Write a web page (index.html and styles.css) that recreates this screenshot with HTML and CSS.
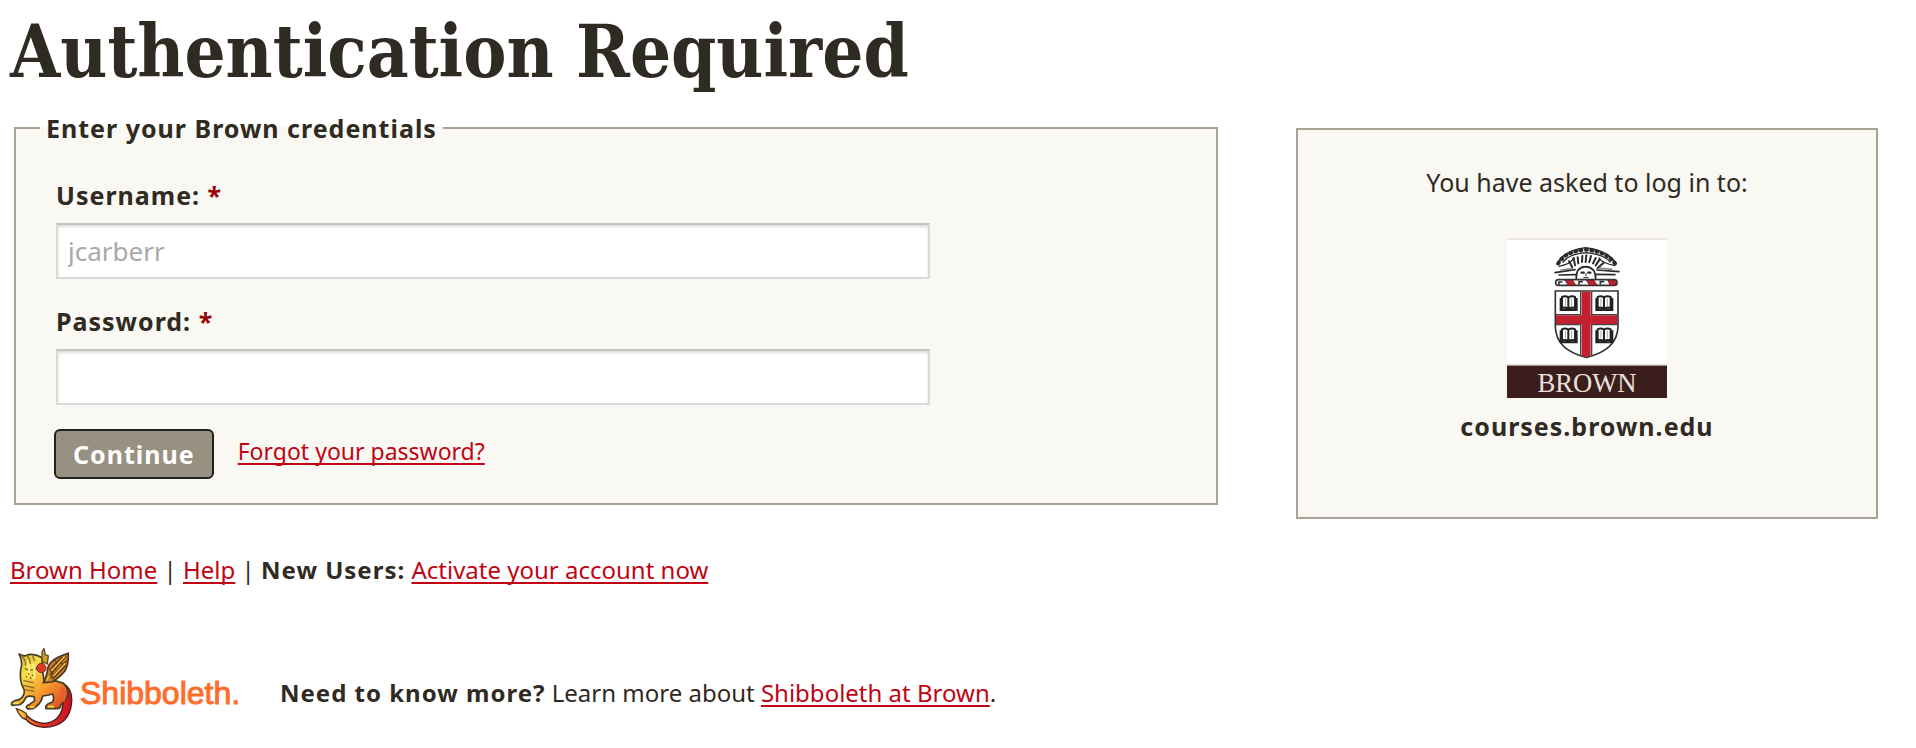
FILE: index.html
```html
<!DOCTYPE html>
<html lang="en">
<head>
  <meta charset="UTF-8" />
  <meta name="viewport" content="width=device-width, initial-scale=1.0"/>
  <title>Authentication Required</title>
  <link rel="stylesheet" href="styles.css">
</head>
<body>

  <header>
    <h1>Authentication Required</h1>
  </header>

  <main class="columns">
    <form class="login" action="#" method="post">
      <fieldset>
        <legend>Enter your Brown credentials</legend>

        <label for="username">Username: <span class="required">*</span></label>
        <input type="text" id="username" name="username" placeholder="jcarberr">

        <label for="password">Password: <span class="required">*</span></label>
        <input type="password" id="password" name="password">

        <div class="actions">
          <button type="submit">Continue</button>
          <a href="#">Forgot your password?</a>
        </div>
      </fieldset>
    </form>

    <aside class="service">
      <p>You have asked to log in to:</p>
      <svg class="crest" viewBox="84 54 480 480" role="img" aria-label="Brown University">
        <rect x="84" y="54" width="480" height="480" fill="#fff"/>
        <rect x="84" y="54" width="480" height="6" fill="#ece7e4"/>
        <!-- clouds and sun -->
        <g fill="none" stroke="#2b2b2b" stroke-linecap="round">
          <path d="M238 130 Q258 94 320 89 Q382 94 408 130" stroke-width="12" stroke-dasharray="3 13"/>
          <path d="M234 134 Q250 92 320 83 Q390 92 412 132 M240 139 Q276 132 284 114 M408 137 Q370 130 360 114 M252 126 Q270 102 320 98 Q372 102 394 126" stroke-width="4"/>
          <path d="M280 142 L270 124 M288 136 L284 114 M298 130 L296 112 M309 126 L310 108 M320 126 L322 106 M331 126 L336 108 M342 130 L350 114 M350 136 L362 118 M356 144 L374 128" stroke-width="6"/>
          <path d="M228 158 L288 149 M240 165 L292 164 M420 155 L354 150 M408 164 L352 163" stroke-width="5"/>
          <path d="M246 150 L280 146 M398 148 L362 144" stroke="#888" stroke-width="5"/>
          <path d="M292 176 Q290 142 320 140 Q350 142 350 176" fill="#fff" stroke-width="5"/>
          <path d="M308 158 h6 M328 158 h6" stroke-width="7"/>
          <path d="M321 161 v7 M314 173 h14" stroke-width="3"/>
        </g>
        <!-- torse -->
        <rect x="230" y="179" width="184" height="17" rx="8" fill="#fff" stroke="#333" stroke-width="5"/>
        <path d="M258 180 H280 L290 196 H268 Z M322 180 H344 L354 196 H332 Z M386 180 H406 Q414 188 408 196 H394 Z" fill="#c3202f" stroke="#5b2026" stroke-width="3"/>
        <path d="M240 194 V186 H250 M300 194 V185 H312 M364 194 V185 H376" fill="none" stroke="#333" stroke-width="5"/>
        <!-- shield -->
        <path d="M229 213 H417 V320 Q415 390 322 412 Q231 390 229 320 Z" fill="#fff" stroke="#333" stroke-width="5"/>
        <path d="M308 215 H335 V286 H415 V312 H335 V407 L322 410 L308 407 V312 H231 V286 H308 Z" fill="#c3202f"/>
        <path d="M305 215 V284 H231 M338 215 V284 H415 M231 314 H305 V406 M415 314 H338 V406" fill="none" stroke="#444" stroke-width="4"/>
        <g fill="#fff" stroke="#222" stroke-width="6">
          <path id="book" d="M249 231 Q259 226 268 232 Q278 226 288 231 V264 Q278 261 268 266 Q259 261 249 264 Z M268 232 V270 M245 234 V270 H293 V234"/>
          <use href="#book" x="107"/>
          <use href="#book" y="97"/>
          <use href="#book" x="107" y="97"/>
        </g>
        <path d="M259 235 V258 M278 235 V258 M366 235 V258 M385 235 V258 M259 332 V355 M278 332 V355 M366 332 V355 M385 332 V355" stroke="#aaa" stroke-width="3"/>
        <rect x="84" y="434" width="480" height="5" fill="#a39794"/>
        <rect x="84" y="438" width="480" height="96" fill="#3b1e1b"/>
        <text class="crest-name" x="324" y="515" text-anchor="middle">BROWN</text>
      </svg>
      <strong>courses.brown.edu</strong>
    </aside>
  </main>

  <nav>
    <a href="#">Brown Home</a> | <a href="#">Help</a> | <strong>New Users:</strong> <a href="#">Activate your account now</a>
  </nav>

  <footer>
    <svg class="shibboleth" viewBox="30 60 690 240" role="img" aria-label="Shibboleth">
      <defs>
        <linearGradient id="fur" x1="0" y1="0" x2="1" y2="1">
          <stop offset="0" stop-color="#c9a93a"/>
          <stop offset="0.3" stop-color="#f5df4c"/>
          <stop offset="0.6" stop-color="#f69a2c"/>
          <stop offset="1" stop-color="#dc3a22"/>
        </linearGradient>
        <linearGradient id="tail" x1="0" y1="0" x2="1" y2="0">
          <stop offset="0" stop-color="#f08a2a"/>
          <stop offset="0.4" stop-color="#e03328"/>
          <stop offset="1" stop-color="#c91320"/>
        </linearGradient>
      </defs>
      <!-- tail -->
      <path d="M190 166 Q218 184 215 222 Q210 296 132 298 Q90 296 72 266 L82 264 Q104 286 136 286 Q180 280 188 236 Q190 212 178 198 Z" fill="url(#tail)" stroke="#4a1a18" stroke-width="4"/>
      <path d="M49 242 Q66 246 78 256 Q84 266 76 274 Q60 268 49 242 Z" fill="#f0a22e" stroke="#5a3a1c" stroke-width="4"/>
      <path d="M58 250 L72 266" stroke="#f8e24c" stroke-width="4"/>
      <!-- body and legs -->
      <path d="M57 78 Q74 88 84 80 Q104 76 124 88 Q130 98 126 112 L132 158 Q164 154 190 166 Q208 182 202 206 Q192 224 182 230 Q184 242 170 242 L138 242 Q134 232 148 226 L158 222 Q164 210 158 198 Q144 202 128 204 Q124 224 110 234 Q100 246 82 242 Q74 234 88 230 L104 218 L102 206 Q86 202 78 208 Q70 226 58 230 L36 232 Q30 224 44 218 Q64 216 70 202 Q76 190 70 180 Q58 160 62 124 Q70 104 57 78 Z" fill="url(#fur)" stroke="#463d25" stroke-width="5" stroke-linejoin="round"/>
      <path d="M62 82 Q80 98 76 112 M82 84 Q92 96 90 108 M98 84 L104 100 M74 122 Q96 132 112 120 M70 158 L100 164 M70 172 L104 180 M72 184 L102 190" fill="none" stroke="#8b6a22" stroke-width="4"/>
      <path d="M82 98 Q92 124 84 148 M98 108 Q108 130 100 154" fill="none" stroke="#fbf08a" stroke-width="6"/>
      <path d="M78 146 h4 M90 150 h4 M84 138 h4 M96 142 h4" stroke="#6d5420" stroke-width="4"/>
      <path d="M42 226 h14 M90 237 h14 M144 236 h18" stroke="#f8e24c" stroke-width="5"/>
      <path d="M182 180 Q196 196 190 220" fill="none" stroke="#ef5a2a" stroke-width="9"/>
      <!-- wings -->
      <path d="M126 100 L126 72 L132 62 L136 80 L145 84 L142 108 Z" fill="#cfa02c" stroke="#5d4620" stroke-width="4"/>
      <circle cx="124" cy="120" r="14" fill="#df3b22" stroke="#7a2a1a" stroke-width="3"/>
      <path d="M205 76 Q206 112 194 130 Q176 152 156 162 L130 164 Q140 146 144 118 Q152 92 205 76 Z" fill="#c4812a" stroke="#4c331b" stroke-width="5"/>
      <path d="M198 86 L146 146 M200 98 L152 150 M198 112 L158 154 M186 88 L148 126 M166 98 L172 112 M158 112 L168 126 M152 128 L160 140 M184 104 L190 116" fill="none" stroke="#5c3518" stroke-width="4"/>
      <path d="M194 86 L154 128 M196 106 L160 144 M148 142 L140 158" fill="none" stroke="#f0bd45" stroke-width="4"/>
      <text class="shibboleth-name" x="240" y="229">Shibboleth.</text>
    </svg>
    <p><strong>Need to know more?</strong> Learn more about <a href="#">Shibboleth at Brown</a>.</p>
  </footer>

</body>
</html>
```
FILE: styles.css
```css
:root {
  --ink: #2f2a22;
  --link: #c00413;
  --taupe: #aaa294;
  --cream: #f9f8f3;
}

* {
  box-sizing: border-box;
}

body {
  font-family: 'Noto Sans', sans-serif;
  font-size: 24px;
  line-height: 32px;
  color: var(--ink);
  background-color: #fff;
  margin: 0;
  padding: 16px 38px 8px 10px;
}

h1 {
  font-family: 'DejaVu Serif Condensed', 'DejaVu Serif', serif;
  font-size: 72px;
  line-height: 72px;
  margin: 0;
}

a {
  color: var(--link);
  text-decoration-thickness: 2px;
  text-underline-offset: 3px;
  text-decoration-skip-ink: none;
}

strong,
legend,
label,
button {
  font-weight: bold;
  letter-spacing: 1px;
}

.columns {
  display: grid;
  grid-template-columns: 1204fr 582fr;
  gap: 78px;
  align-items: start;
  padding: 24px 0 0 4px;
  font-size: 25px;
}

fieldset {
  margin: 0;
  padding: 35px 40px 24px;
  border: 2px solid var(--taupe);
  background-color: var(--cream);
}

legend {
  margin-left: -16px;
  padding: 0 6px;
}

label {
  display: block;
  margin-bottom: 12px;
}

.required {
  color: #990000;
}

input {
  display: block;
  width: 78%;
  height: 56px;
  margin-bottom: 26px;
  padding: 0 10px;
  font: inherit;
  font-size: 26px;
  color: var(--ink);
  background-color: #fff;
  border: 2px solid #d9d9d9;
  border-top-color: #c3c3c3;
  box-shadow: inset 0 2px 3px #ddd;
}

input::placeholder {
  color: #a9a9a9;
}

.actions {
  display: flex;
  align-items: flex-start;
  gap: 24px;
  margin: -2px 0 0 -2px;
}

button {
  padding: 7px 17px;
  font-family: inherit;
  font-size: 25px;
  line-height: 32px;
  color: #fff;
  background-color: #989080;
  border: 2px solid #222;
  border-radius: 6px;
}

.actions a {
  font-size: 23px;
  line-height: 44px;
}

.service {
  display: flex;
  flex-direction: column;
  align-items: center;
  margin-top: 16px;
  padding: 36px 24px 75px;
  border: 2px solid var(--taupe);
  background-color: var(--cream);
}

.service p {
  margin: 0 0 40px;
}

.crest {
  width: 160px;
  height: 160px;
  margin-bottom: 12px;
}

.crest-name {
  font-family: 'Liberation Serif', serif;
  font-size: 80px;
  fill: #e8e0dd;
}

nav {
  margin-top: 35px;
}

footer {
  display: flex;
  align-items: center;
  gap: 40px;
  margin-top: 62px;
}

footer p {
  margin: 10px 0 0;
}

.shibboleth {
  width: 230px;
  height: 80px;
}

.shibboleth-name {
  font-family: 'Liberation Sans', sans-serif;
  font-size: 96px;
  fill: #ff6d2d;
  stroke: #ff6d2d;
  stroke-width: 3px;
}
```
